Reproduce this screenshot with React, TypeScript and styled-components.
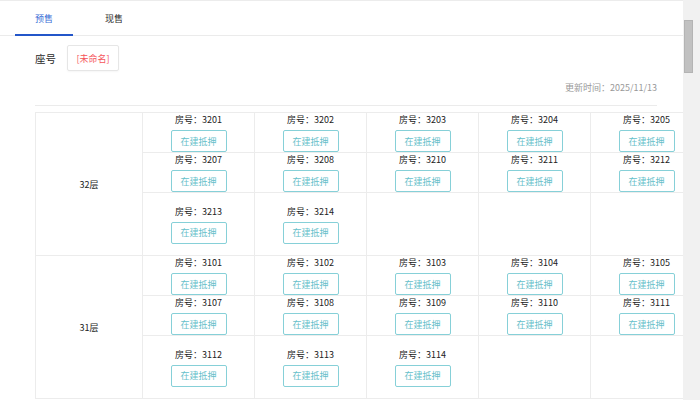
import React from "react";
import styled, { createGlobalStyle } from "styled-components";

const Global = createGlobalStyle`
  html, body { margin: 0; padding: 0; overflow: hidden; background: #fff; }
  body { font-family: "Noto Sans CJK SC", "Noto Sans", sans-serif; color: #333; }
  * { box-sizing: border-box; }
`;

const Frame = styled.div`
  display: flex;
  height: 100vh;
  overflow: hidden;
`;

const Main = styled.div`
  flex: 1;
  min-width: 0;
  overflow: hidden;
`;

const ScrollTrack = styled.div`
  width: 17px;
  flex-shrink: 0;
  background: #f1f1f1;
  padding: 20px 7px 0 1px;
`;

const ScrollThumb = styled.div`
  height: 53px;
  background: #c1c1c1;
  border: 1px solid #b4b4b4;
`;

const Page = styled.div`
  border-top: 1px solid #ececec;
  padding-bottom: 40px;
`;

const TabBar = styled.div`
  display: flex;
  gap: 12px;
  padding-left: 15px;
  height: 35px;
  border-bottom: 1px solid #ebebeb;
`;

const Tab = styled.div<{ $active?: boolean }>`
  padding: 0 20px;
  display: flex;
  align-items: center;
  font-size: 9px;
  color: ${(p) => (p.$active ? "#3a6ed6" : "#2a2a2a")};
  border-bottom: 2px solid ${(p) => (p.$active ? "#2356c9" : "transparent")};
  margin-bottom: -1px;
  padding-top: 1px;
`;

const Content = styled.div`
  padding: 0 26px 0 35px;
`;

const SeatRow = styled.div`
  display: flex;
  align-items: center;
  gap: 11px;
  margin-top: 9px;
`;

const SeatLabel = styled.span`
  font-size: 10.5px;
  color: #2a2a2a;
`;

const SeatButton = styled.div`
  width: 52px;
  height: 26px;
  border: 1px solid #e6e6e6;
  border-radius: 2px;
  box-shadow: 0 1px 2px rgba(0, 0, 0, 0.04);
  display: flex;
  align-items: center;
  justify-content: center;
  font-size: 9px;
  color: #f5545a;
`;

const UpdateTime = styled.div`
  text-align: right;
  font-size: 9px;
  color: #999;
  margin-top: 10px;
  line-height: 14px;
  padding-bottom: 10px;
  border-bottom: 1px solid #ebebeb;
`;

const Table = styled.div`
  margin-top: 6px;
  width: 667px;
  border-top: 1px solid #ececec;
  border-left: 1px solid #ececec;
`;

const FloorRow = styled.div`
  display: grid;
  grid-template-columns: 107px 560px;
  border-bottom: 1px solid #ececec;
`;

const FloorLabel = styled.div`
  display: flex;
  align-items: center;
  justify-content: center;
  font-size: 9px;
  color: #222;
  border-right: 1px solid #ececec;
`;

const RoomGrid = styled.div`
  display: grid;
  grid-template-columns: repeat(5, 112px);
  grid-template-rows: auto auto 1fr;
  min-height: 142px;
`;

const RoomCell = styled.div<{ $last?: boolean }>`
  display: flex;
  flex-direction: column;
  align-items: center;
  justify-content: center;
  gap: 4px;
  border-right: 1px solid #ececec;
  border-bottom: ${(p) => (p.$last ? "none" : "1px solid #ececec")};
`;

const RoomNo = styled.div`
  font-size: 9px;
  line-height: 13px;
  color: #222;
`;

const StatusButton = styled.div`
  width: 56px;
  height: 22px;
  border: 1px solid #86d0d8;
  border-radius: 2px;
  display: flex;
  align-items: center;
  justify-content: center;
  font-size: 9px;
  color: #66c0ca;
`;

type Floor = { floor: number; rows: (string | null)[][] };

const makeFloor = (f: number): Floor => {
  const r = (n: number) => `${f}${String(n).padStart(2, "0")}`;
  const pad = (arr: string[]) => {
    const out: (string | null)[] = [...arr];
    while (out.length < 5) out.push(null);
    return out;
  };
  if (f === 32) {
    return {
      floor: f,
      rows: [
        pad([r(1), r(2), r(3), r(4), r(5)]),
        pad([r(7), r(8), r(10), r(11), r(12)]),
        pad([r(13), r(14)]),
      ],
    };
  }
  return {
    floor: f,
    rows: [
      pad([r(1), r(2), r(3), r(4), r(5)]),
      pad([r(7), r(8), r(9), r(10), r(11)]),
      pad([r(12), r(13), r(14)]),
    ],
  };
};

const floors: Floor[] = [32, 31].map(makeFloor);

export default function App() {
  return (
    <>
      <Global />
      <Frame>
        <Main>
          <Page>
            <TabBar>
              <Tab $active>预售</Tab>
              <Tab>现售</Tab>
            </TabBar>
            <Content>
              <SeatRow>
                <SeatLabel>座号</SeatLabel>
                <SeatButton>[未命名]</SeatButton>
              </SeatRow>
              <UpdateTime>更新时间：2025/11/13</UpdateTime>
              <Table>
                {floors.map((fl) => (
                  <FloorRow key={fl.floor}>
                    <FloorLabel>{fl.floor}层</FloorLabel>
                    <RoomGrid>
                      {fl.rows.map((row, ri) =>
                        row.map((room, ci) => (
                          <RoomCell key={`${ri}-${ci}`} $last={ri === fl.rows.length - 1}>
                            {room && (
                              <>
                                <RoomNo>房号：{room}</RoomNo>
                                <StatusButton>在建抵押</StatusButton>
                              </>
                            )}
                          </RoomCell>
                        ))
                      )}
                    </RoomGrid>
                  </FloorRow>
                ))}
              </Table>
            </Content>
          </Page>
        </Main>
        <ScrollTrack>
          <ScrollThumb />
        </ScrollTrack>
      </Frame>
    </>
  );
}
